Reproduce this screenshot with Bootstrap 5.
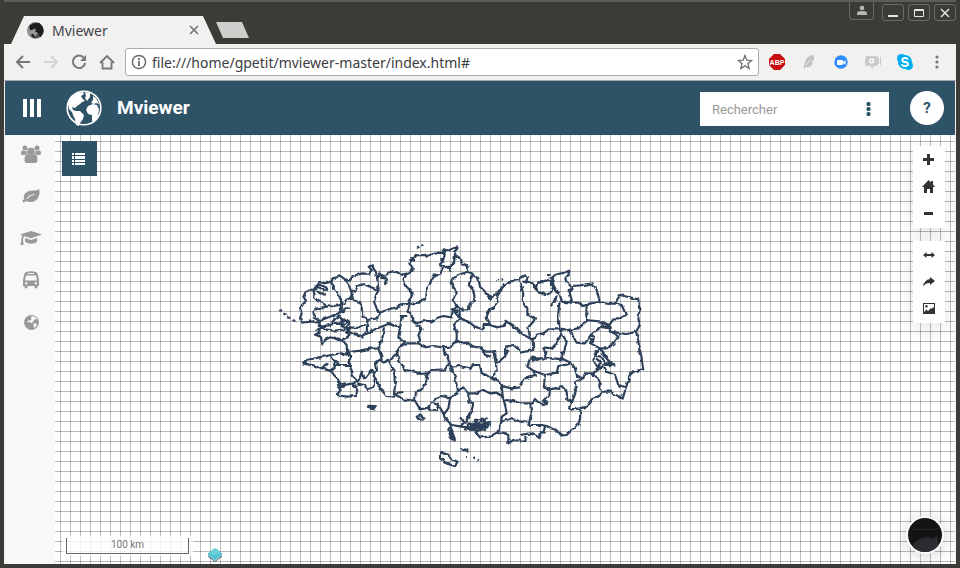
<!DOCTYPE html>
<html lang="fr">
<head>
<meta charset="utf-8">
<meta name="viewport" content="width=device-width, initial-scale=1">
<title>Mviewer</title>
<link rel="stylesheet" href="https://cdn.jsdelivr.net/npm/bootstrap@5.3.0/dist/css/bootstrap.min.css">
<style>
body{font-family:Roboto,sans-serif;background:#3c3b37;border:solid #3c3b37;border-width:0 4px 4px;box-shadow:inset 0 1px #5a5956}
button,.plain{background:none;border:0;padding:0;line-height:1;display:flex;align-items:center;justify-content:center;color:inherit}
svg{display:block;flex:none}
.chrome-ui{font-family:"Noto Sans","Open Sans",sans-serif;font-size:14px;color:#45444a}
.tabstrip{height:44px;padding:0 0 0 7px;border-top:2px solid #5c5b5e}
.tab-shape{width:205px;height:28px;background:#f2f1f0;clip-path:polygon(0 100%,13px 0,calc(100% - 13px) 0,100% 100%);padding:0 17px 0 16px}
.newtab{width:33px;height:16px;background:#cfcecc;clip-path:polygon(0 0,26px 0,100% 100%,7px 100%);margin-bottom:6px}
.winbtns{gap:4px}
.winbtn{width:22px;height:17px;border:1px solid #6b6a66;border-radius:3px;margin-top:2px}
.winuser{width:25px;height:18px;border:1px solid #6b6a66;border-top:0;border-radius:0 0 4px 4px}
.toolbar{height:37px;background:#f2f1f0;border-bottom:1px solid #a9a8a6;padding:0 3px 0 5px}
.navbtn{width:28px;height:28px}
.omnibox{height:28px;background:#fff;border:1px solid #aeadab;border-radius:3px;padding:0 5px;margin:0 2px 0 4px}
.omnibox input{border:0;outline:0;min-width:0;color:#3c3b40;background:none;padding:0 5px}
.extbtn{width:32px;height:28px}
.app{border:solid #f2f1f0;border-width:0 1px}
.topbar{height:54px;background:#2e5367;color:#fff;padding:0 11px 0 18px}
.brandlink{margin-left:25px;gap:15px}
.brand{font-size:19px;font-weight:700;line-height:24px}
.searchbox{width:189px;height:34px;background:#fff;padding:0 10px 0 12px;margin:2px 21px 0 auto}
.searchbox input{border:0;outline:0;min-width:0;font-size:13px;padding:2px 0 0;color:#444}
.searchbox input::placeholder{color:#999;opacity:1}
.help{width:34px;height:34px;border-radius:50%;background:#fff;color:#2e5367;font-size:15px;font-weight:700}
.side{width:50px;background:#f8f8f8;color:#999;padding:8px 0 0 2px}
.side a{height:22px;margin-bottom:20px;color:inherit}
.map{background:#fff;background-image:linear-gradient(90deg,#00000040 1px,transparent 1px),linear-gradient(#00000048 1px,transparent 1px);background-position:5px 6px;background-size:10px 10px;overflow:hidden;padding:6px 10px 8px 7px}
.region{position:absolute;left:215px;top:105px;width:380px;height:240px}
.layers{width:35px;height:35px;background:#2e5367;color:#fff;padding-right:2px}
.scalebox{background:#ffffffcc;padding:2px 4px;font-size:10px;color:#777}
.scalebar{width:123px;height:16px;border:1px solid #666;border-top:0;line-height:14px}
.pin{margin:0 0 -6px 15px}
.toolcol{padding:5px 0 2px;gap:13px}
.tools{background:#fff;width:32px;height:82px;color:#333;box-shadow:0 6px 20px #0000001c}
.tools button{height:27px;width:32px;padding-right:1px}
.basemap{width:38px;height:38px;border:2px solid #fafafa;border-radius:50%;overflow:hidden;box-shadow:0 2px 16px #00000030;margin-right:1px}
</style>
<script src="https://cdn.jsdelivr.net/npm/bootstrap@5.3.0/dist/js/bootstrap.bundle.min.js"></script>
</head>
<body class="min-vh-100 d-flex flex-column">
<header class="chrome-ui">
 <div class="tabstrip d-flex align-items-end">
  <div class="tab-shape d-flex align-items-center">
   <svg width="17" height="17" viewBox="0 0 36 36"><circle cx="18" cy="18" r="17.500" fill="#555"/><circle cx="12" cy="20" r="11" fill="#999"/><path fill="#1d1d1d" d="M6 8l8-5 12-1 8 10 1 9-7 12-5-10-5-2 0-7-6 2-6 2zM8 26l5-1 4 7-3 2z"/></svg>
   <span class="ms-1 ps-1 flex-grow-1">Mviewer</span>
   <button aria-label="Fermer l'onglet"><svg width="10" height="10" viewBox="0 0 10 10" stroke="#777" stroke-width="1.700"><path d="M1 1l8 8M9 1l-8 8"/></svg></button>
  </div>
  <button class="newtab" aria-label="Nouvel onglet"></button>
  <div class="winbtns ms-auto align-self-start d-flex">
   <button class="winuser me-1" aria-label="Profil"><svg width="12" height="11" viewBox="0 0 12 11" fill="#b8b7b3"><circle cx="6" cy="3" r="2.300"/><path d="M1 10V8q0-2 5-2t5 2v2z"/></svg></button>
   <button class="winbtn" aria-label="Réduire"><svg width="12" height="10"><path d="M1 8h10" stroke="#e6e5e1" stroke-width="2"/></svg></button>
   <button class="winbtn" aria-label="Agrandir"><svg width="12" height="10"><path d="M1.500 1.500h9v7h-9zM1 2.500h10" fill="none" stroke="#e6e5e1"/></svg></button>
   <button class="winbtn" aria-label="Fermer"><svg width="10" height="10"><path d="M1 1l8 8M9 1l-8 8" stroke="#e6e5e1" stroke-width="1.500"/></svg></button>
  </div>
 </div>
 <div class="toolbar d-flex align-items-center">
  <button class="navbtn" aria-label="Retour"><svg width="16" height="16" fill="none" stroke="#777" stroke-width="2"><path d="M15 8H2M8 2L2 8l6 6"/></svg></button>
  <button class="navbtn" aria-label="Avancer"><svg width="16" height="16" fill="none" stroke="#d4d3d1" stroke-width="2"><path d="M1 8h13M8 2l6 6-6 6"/></svg></button>
  <button class="navbtn" aria-label="Actualiser"><svg width="16" height="16" fill="none" stroke="#777" stroke-width="2"><path d="M13 4a6.200 6.200 0 1 0 1.200 5"/><path d="M15 1v6H9z" fill="#777" stroke="none"/></svg></button>
  <button class="navbtn" aria-label="Accueil"><svg width="16" height="16" fill="none" stroke="#777" stroke-width="1.800"><path d="M1 9l7-7 7 7M3.500 8v6.500h9V8"/></svg></button>
  <div class="omnibox d-flex align-items-center flex-grow-1">
   <svg width="16" height="16" fill="none" stroke="#6b6b6b" stroke-width="1.500"><circle cx="8" cy="8" r="6.600"/><path d="M8 7v5M8 4v2" stroke-width="1.800"/></svg>
   <input class="flex-grow-1" aria-label="Adresse" value="file:///home/gpetit/mviewer-master/index.html#">
   <button aria-label="Ajouter aux favoris"><svg width="16" height="16" fill="none" stroke="#777" stroke-width="1.400"><path d="M8 1.500l1.800 4.700 4.900.3-3.800 3.100 1.200 4.900L8 11.800l-4.100 2.700 1.200-4.900L1.300 6.500l4.900-.3z"/></svg></button>
  </div>
  <div class="d-flex">
  <button class="extbtn" aria-label="Adblock Plus"><svg width="16" height="16"><path fill="#c70d0d" d="M5 0h6l5 5v6l-5 5H5l-5-5V5z"/><text x="8" y="11" font-family="Liberation Sans,sans-serif" font-size="7" font-weight="700" fill="#fff" text-anchor="middle">ABP</text></svg></button>
  <button class="extbtn" aria-label="Plume"><svg width="14" height="16" fill="#c4c3c1"><path d="M2 15l2-2q6 1 7-5l-2 0 3-2 0-5q-7 0-9 7-2 4-1 7z"/><path d="M3 12l6-7" stroke="#e4e3e1"/></svg></button>
  <button class="extbtn" aria-label="Visioconférence"><svg width="14" height="14"><circle cx="7" cy="7" r="6.700" fill="#2d8cff"/><rect x="3" y="5" width="6" height="5" rx="1" fill="#fff"/><path d="M9 7l2.500-2v5L9 8z" fill="#fff"/></svg></button>
  <button class="extbtn" aria-label="Discussion"><svg width="16" height="14"><path d="M2 1h9q2 0 2 2v6q0 2-2 2H9l-2 3-1-3H2q-2 0-2-2V3q0-2 2-2z" fill="#cbcac8"/><path d="M13 3h1v6h-1zM15 2h1v8h-1z" fill="#cbcac8"/><circle cx="6.500" cy="6" r="1.800" fill="none" stroke="#fff" stroke-width="1.300"/><path d="M8.500 4v4" stroke="#fff"/></svg></button>
  <button class="extbtn" aria-label="Skype"><svg width="16" height="16"><g fill="#00aff0"><circle cx="8" cy="8" r="7"/><circle cx="4.500" cy="4.500" r="4.500"/><circle cx="11.500" cy="11.500" r="4.500"/></g><path d="M11 5.500Q10.500 4 8 4 5.300 4 5.300 6t2.700 2 3 2.200Q11 12 8 12t-3-1.800" fill="none" stroke="#fff" stroke-width="1.900"/></svg></button>
  <button class="extbtn" aria-label="Menu"><svg width="4" height="14" fill="#777"><circle cx="2" cy="2" r="1.600"/><circle cx="2" cy="7" r="1.600"/><circle cx="2" cy="12" r="1.600"/></svg></button>
  </div>
 </div>
</header>
<div class="app d-flex flex-column flex-grow-1">
 <nav class="topbar d-flex align-items-center">
  <button aria-label="Thèmes"><svg width="18" height="18" fill="currentColor"><path d="M0 0h4v18H0zM7 0h4v18H7zM14 0h4v18h-4z"/></svg></button>
  <a href="#" class="brandlink d-flex align-items-center text-white text-decoration-none">
   <svg width="36" height="36" viewBox="0 0 36 36"><circle cx="18" cy="18" r="16.800" fill="none" stroke="#fff" stroke-width="1.600"/><path fill="#fff" d="M2 14L5 8l6-5 6-1 1 2-3 2 1 2 3 3-3 1-2 2-3 2-2 2-3-1 1 3 3 1 4 0 4 4-1 4-3 4-1 3-3-1-1-6-2-4-1-3-3-3zM19 2l5 1 0 4-3 4-2-3 1-2zM22 16l5-2 4 1 2 4-1 7-4 6-2-1 0-6-4-1-2-4zM27 6l3 2 3 6-3-1-2 1-3-1 2-3z"/></svg>
   <span class="brand">Mviewer</span></a>
  <div class="searchbox d-flex align-items-center">
   <input type="text" class="flex-grow-1" placeholder="Rechercher" aria-label="Rechercher">
   <button class="ps-3 pe-1 me-1" aria-label="Options"><svg width="5" height="14" fill="#2e5367"><rect width="4" height="4" x=".5" rx="1.500"/><rect width="4" height="4" x=".5" y="5" rx="1.500"/><rect width="4" height="4" x=".5" y="10" rx="1.500"/></svg></button>
  </div>
  <button class="help">?</button>
 </nav>
 <main class="d-flex flex-grow-1">
  <nav class="side d-flex flex-column align-items-stretch">
   <a class="plain" href="#" aria-label="Population"><svg width="20" height="18" viewBox="0 0 20 18" fill="currentColor"><circle cx="10" cy="6.500" r="3.800"/><circle cx="4" cy="3" r="2.500"/><circle cx="16" cy="3" r="2.500"/><path d="M3.500 15q0-6 3.200-6 3.300 2.300 6.600 0 3.200 0 3.200 6 0 3-2.500 3H6q-2.500 0-2.500-3zM1.500 10Q0 10 0 8.500 0 5.300 2 5.500q1.700 1 3.500 0-.3 2.200 1 3.200Q4.500 9 4 10zM18.500 10q1.500 0 1.500-1.500 0-3.200-2-3-1.700 1-3.500 0 .3 2.200-1 3.200 2 .3 2.500 1.300z"/></svg></a>
   <a class="plain" href="#" aria-label="Environnement"><svg width="18" height="16" viewBox="0 0 18 16"><path fill="currentColor" d="M17 1Q15 3 10.500 2.500 2 3 1.800 9l.4 2L.5 12.500l0 1.500 1.500.5L4 13q8 3 12-3Q18.500 5 17 1z"/><path d="M5 10.500Q8 6.800 12.500 6.500" fill="none" stroke="#f8f8f8" stroke-width="1.100"/></svg></a>
   <a class="plain" href="#" aria-label="Éducation"><svg width="22" height="16" viewBox="0 0 22 16" fill="currentColor"><path d="M11 1l11 3.600L11 8.300 4.500 6.200Q3 7 3 9.500l.5 5.500h-3L1.500 9Q1.500 6.800 2.600 5.500L0 4.600zM5 8l6 2 6-2 .3 3.500Q15 13.700 11 13.700T5 11.500z"/></svg></a>
   <a class="plain" href="#" aria-label="Transports"><svg width="16" height="18" viewBox="0 0 16 18"><path fill="currentColor" fill-rule="evenodd" d="M3 1q5-1.500 10 0 1.500.5 1.800 2.500L16 9v6h-1.500v1.500q-1.500 2-3 0V15h-7v1.500q-1.500 2-3 0V15H0V9l1.200-5.500Q1.500 1.500 3 1zM5 2v1h6V2zM3 4.500L2 9.500h12l-1-5zM3.200 11a1.200 1.200 0 1 0 .1 0zM12.700 11a1.200 1.200 0 1 0 .1 0z"/></svg></a>
   <a class="plain" href="#" aria-label="Territoires"><svg width="15" height="15" viewBox="0 0 15 15"><circle cx="7.500" cy="7.500" r="7.400" fill="currentColor"/><path fill="#f8f8f8" d="M7 1.500l3-.3 2.500 2 .5 1.500-2-.7-1 1.500L8.500 7 8 8.500 6 7 4 7.500 3 6.500l1.500-1 1.500 0 1.500-1.500zM9.500 9l2-1 1.500 2-1.500 2-1.500 1z"/></svg></a>
  </nav>
  <section class="map position-relative flex-grow-1 d-flex justify-content-between">
   <svg class="region" viewBox="0 0 1140 720" fill="none" stroke="#2c4059" stroke-width="6.500" stroke-linejoin="round">
    <filter id="coast" x="-5%" y="-5%" width="110%" height="110%" color-interpolation-filters="sRGB"><feTurbulence type="fractalNoise" baseFrequency=".07" numOctaves="1" seed="4"/><feDisplacementMap in="SourceGraphic" scale="12" xChannelSelector="R" yChannelSelector="G"/></filter>
    <g filter="url(#coast)">
    <path stroke="none" fill="#000" fill-opacity="0" d="M0 0h1140v720H0z"/>
    <!-- north-west -->
    <path d="M28 210l5 3M40 220l8 5M50 232l14 2M70 244l6-3M150 130L140 142 130 150 118 148 106 158 100 170 108 182 98 194 90 205 95 220 90 235 96 248 112 246 130 244 140 248M130 150L140 138 150 126 165 130 180 126 188 115 200 112 212 108 225 118 240 122 248 108 262 104 278 100 296 102 305 90 296 80 306 76 312 88 318 96 322 118 328 100 336 108 348 118 345 132 352 128M325 105l12 0 8 10-14-2M345 108L352 98 370 94 390 98M130 150L134 165M140 140L160 150 172 148M138 150L150 160 168 160M135 140L150 135 168 142 176 152M132 172L145 184 160 190 170 200 140 206 130 216 135 235 150 244M134 160L132 175M170 200L190 198 210 195M188 116L184 128 190 145 200 156 208 168 214 185 212 200 214 215M225 118L236 132 242 150 246 162 240 175 228 180 222 192 214 190M242 152L256 155 262 138 280 132 300 140 324 150M322 118L326 150 318 165 312 185 320 205 328 218 322 235 292 240 280 230 278 200 270 186 255 182 242 172M328 218L345 212 365 206 390 200M292 240L290 280 275 288 250 282 236 275 240 262 262 264 290 252M140 248L160 238 185 228 210 218 222 210 238 202M190 240L210 226 205 228 220 240 208 248 225 252 190 252 150 262M185 248L200 232M222 236L240 250 228 262 236 270 215 258 232 244 212 236M150 256L165 268 190 272 215 270 230 264M136 270L150 266 145 280 135 284 152 290 158 316 165 300 180 292 200 298 218 302 238 285 228 272M150 244L146 262M290 280L310 270 330 262 355 252 370 258 390 262M342 262L338 290 325 325 300 326 270 332 240 336M218 302L230 315 232 345M275 288L280 298M325 325L332 345"/>
    <!-- north centre -->
    <path transform="translate(360)" d="M12 96L30 100 45 106 60 98 68 84 58 70 70 55 80 46 100 45 110 48 130 42 150 38 165 40M56 62L72 58M62 50L74 64M104 42L112 52M80 24L88 20M94 18L100 15M165 40L158 28 175 32 200 20 195 45 212 55 215 70 232 76 235 95 250 106 265 115 270 140 290 160 303 172 320 165M292 168L305 178M165 40L160 60 150 75 160 82M152 55l12 12M195 45L192 70 178 80 185 95M178 80L160 82 152 100 130 112 118 135 108 150 105 175 85 188 60 192 45 192 20 200M130 102l12 4M45 106L40 120 50 140 68 160 60 180 55 192M232 95L205 105 186 118 182 130 200 155 188 180 200 200 215 208 236 208 240 190 255 182 250 150 236 135 242 115 250 106M320 165L340 140 362 124 390 120M320 120l4 2M335 118l4 2M338 132l4 2M320 165L325 180 315 200 298 210 290 230 300 255M200 200L188 212 185 232 160 228 140 234 125 244 105 242 80 250 66 240 65 225 52 215 60 192M52 228L35 228 30 262 25 290 45 310 85 310 90 300 85 285 95 265 80 255M0 250L28 265M85 310L105 322 130 318 160 322 185 320 200 300 215 310 235 308 245 320 270 322 285 335 310 335 318 370M190 205L208 235 192 255 200 280 200 300M188 212L208 212 210 235M208 235L235 245 255 260 278 268 280 255 300 255 320 262 340 258 350 245 365 255 380 265 390 278M345 345L350 320 370 315 390 332M45 310L25 325 20 345M160 322L165 345"/>
    <!-- north-east -->
    <path transform="translate(750)" d="M0 115L12 106 24 112 16 128 8 122M0 125L10 160 8 180 22 205 22 225 45 235 40 245 25 262 30 290 38 300 0 278M16 128L24 125 38 130 45 145 55 130 75 122 90 125 100 140 92 160 75 165 55 155 45 145M44 135l8 15M80 105l12 0M90 118L105 105 130 98 148 92 145 105 136 115 140 128 155 140 150 160 155 185M140 155L158 152M95 115L105 145 120 165 125 185M90 120L110 160 118 155M98 142l10 8M110 165L105 185 92 198M240 186L230 150 218 130 180 136 155 138M125 185L155 188 175 188 190 198 210 190 240 186 265 192 285 190 300 165 330 172 355 178 358 210 355 240 360 255 348 275 355 300 358 330 360 345M118 185L115 225 118 265 145 270 175 265 198 245 200 195M285 190L305 195 318 225 300 235 282 235 268 255 245 245 198 240M118 265L90 265 70 280 50 285 38 300 40 330 0 338M112 262L128 272M118 265L125 280 110 310 95 325 70 322 78 345M125 280L140 305 130 345M145 270L160 290 170 308 195 310 212 285 245 260 268 255M245 245L250 262 268 262M268 255L270 275 320 282 348 275M212 285L222 290 220 300 212 310 240 325 260 325 280 310 295 290 275 275M210 295l12 8M225 345L240 325 252 345"/>
    <!-- south-west -->
    <path transform="translate(0 330)" d="M98 40L110 30 150 22 182 15 215 10 235 15M98 40L130 46 155 55 165 45 175 40M102 36l12 2M155 55L182 62 195 50 190 30 182 15M182 62L200 85 208 105 225 100 222 110 205 112 212 120 200 135 230 140 258 138 262 120 250 105 258 90M208 98l14 8M190 30L205 40 200 45 235 45 240 15 232 0M240 15L240 50 250 80 262 95 270 85M225 105L250 100 262 110M270 85L275 65 285 85 305 60 315 85 310 110 295 118 280 105 262 100M274 72l8 12M330 0L335 25 315 40 318 60 310 75M318 85L330 115 350 138 375 140M375 100L372 60 355 30 340 38 330 28M360 30L380 15 385 0M296 148l3 1M296 168L305 166 320 170 315 178 300 176ZL318 174"/>
    <!-- south centre -->
    <path transform="translate(360 330)" d="M18 0L30 35 45 60 75 65 90 72 110 70M18 12L5 25M0 58L12 60 18 95 12 130 25 128 40 126M12 130L40 148 75 152 90 178 120 172M75 152L78 125 100 115 110 90 112 70 125 60 165 58 178 38 170 15 160 0M178 38L185 60 195 80 200 105 205 125 180 145 165 140 150 138 130 155M115 170L125 158 145 165 140 180 120 178ZM145 165L160 190 165 205 185 225 215 230M180 145L175 175 160 195M180 50L210 48 240 55 250 45 270 45 275 70 290 75 300 80 325 92 340 110 365 115 390 112M200 125L220 112 235 130 255 130 280 120 300 130 320 128 338 138 335 105M235 130L235 155 250 160 245 185 230 210 235 230M210 205L225 218 212 230 240 232 225 238 250 240 240 220 260 230 255 210 275 205 270 220 290 205 280 225 300 215 292 232 280 222 285 240 265 235 270 222 250 225 258 245 275 242M250 215L290 235M262 212L265 240M278 205L295 225M240 235L285 230M255 245L270 262 300 260 320 248 340 248 355 255 355 280 370 270 390 272M322 240l5 12M338 138L345 165 350 190 335 200 330 240 318 250M345 150L365 152 390 160M335 215L365 205 390 215M278 0L285 15 305 20M315 0L318 40 320 65 305 80M318 40L345 20 355 0M180 225L175 240 185 268 195 270 185 240ZM180 240L188 265M80 200L90 196 104 203 98 209 85 207ZM150 305L175 315 185 328 203 335 195 347 172 342 150 325ZM212 293L222 300 235 303M220 296l15 6M228 318l3 0M250 322l6 3M264 329l3 1"/>
    <!-- south-east -->
    <path transform="translate(750 330)" d="M0 105L15 85 45 78 40 62 22 50 30 25 60 25 100 25 130 28 155 40 165 55 172 80 190 85 195 70 220 70 235 55 220 30 228 0M75 0L80 25M125 5L130 28 122 20M35 22L55 28 40 34ZM40 62L75 75 110 68 115 48 150 42M75 75L72 105 80 120 90 118 88 135 70 155 82 158 70 165 45 150 38 160 25 160 0 160M74 112l12 8M80 120L105 115 125 108 140 125 142 150 155 155 148 170 155 178 182 175 200 170 215 148 240 138 245 125M105 115l15 2M190 85L165 98 168 120 158 155M192 75l20-5 10 8M220 70L240 95 238 110 245 125 270 125 308 146 318 112 330 75 340 65 370 58 365 25 360 0M235 55L250 45 260 65 285 75 295 105 318 112M235 55L240 35 228 25M245 0L255 20 275 42 255 40 245 20 230 18M255 45l28-2-18-6 6 14M30 160L35 190 25 225 65 225 80 228 105 240 125 256 140 255 155 240 175 225 180 205 182 175M0 215L22 215M65 225L75 230 70 248 60 245M0 255L30 250 60 262 62 245M0 275L15 275 20 258"/>
    </g>
   </svg>
   <div class="position-relative d-flex flex-column justify-content-between">
    <button class="layers" aria-label="Légende"><svg width="13" height="12" fill="currentColor"><path d="M0 0h2v2H0zM3 0h10v2H3zM0 3h2v3H0zM3 3h10v3H3zM0 7h2v2H0zM3 7h10v2H3zM0 10h2v2H0zM3 10h10v2H3z"/></svg></button>
    <div class="d-flex align-items-end">
     <div class="scalebox"><div class="scalebar text-center">100 km</div></div>
     <button class="pin" aria-label="Couches"><svg width="14" height="14"><path d="M0 7.500l7 5.500 7-5.500v1L7 14 0 8.500z" fill="#2e5367"/><path d="M5.500.8q1.500-1.300 3 0L14 5.500v1.500L7 12.500 0 7V5.500z" fill="#52c3d0"/><path d="M1 5l5-4 2 0 5 4-7 2z" fill="#6eced9"/></svg></button>
    </div>
   </div>
   <div class="toolcol position-relative d-flex flex-column align-items-end">
    <div class="tools">
     <button aria-label="Zoom avant"><svg width="11" height="11" fill="currentColor"><path d="M4 0h3v4h4v3H7v4H4V7H0V4h4z"/></svg></button>
     <button aria-label="Vue initiale"><svg width="13" height="13" fill="currentColor"><path d="M6.500 0L9 2.500V1h2v3.500L13 7h-2v6H8V9H5v4H2V7H0z"/></svg></button>
     <button aria-label="Zoom arrière"><svg width="9" height="3"><path fill="currentColor" d="M0 0h9v3H0z"/></svg></button>
    </div>
    <div class="tools">
     <button aria-label="Mesurer"><svg width="12" height="6" fill="currentColor"><path d="M0 3l3.500-3v2h5V0L12 3 8.500 6V4h-5v2z"/></svg></button>
     <button aria-label="Partager"><svg width="12" height="10" fill="currentColor"><path d="M7 0l5 4-5 4V6Q3 5.500 0 9.500 1 3 7 2z"/></svg></button>
     <button aria-label="Exporter l'image"><svg width="12" height="11" fill="currentColor"><path fill-rule="evenodd" d="M0 0h12v11H0zM1 1v8l2.500-2.500L5 8l3-3 1 1 1-2 1 1V1zM3.500 2a1.300 1.300 0 1 1-.1 0z"/></svg></button>
    </div>
    <button class="basemap mt-auto" aria-label="Fond de carte"><svg width="34" height="34"><path fill="#141414" d="M0 0h34v34H0z"/><path fill="#2b2c2f" d="M4 34l2-9 7-5 7-1 4 2 5-3 3 16z"/><path d="M4 12l8-1 7 1 8-1 5-1" fill="none" stroke="#28292b"/></svg></button>
   </div>
  </section>
 </main>
</div>
</body>
</html>
